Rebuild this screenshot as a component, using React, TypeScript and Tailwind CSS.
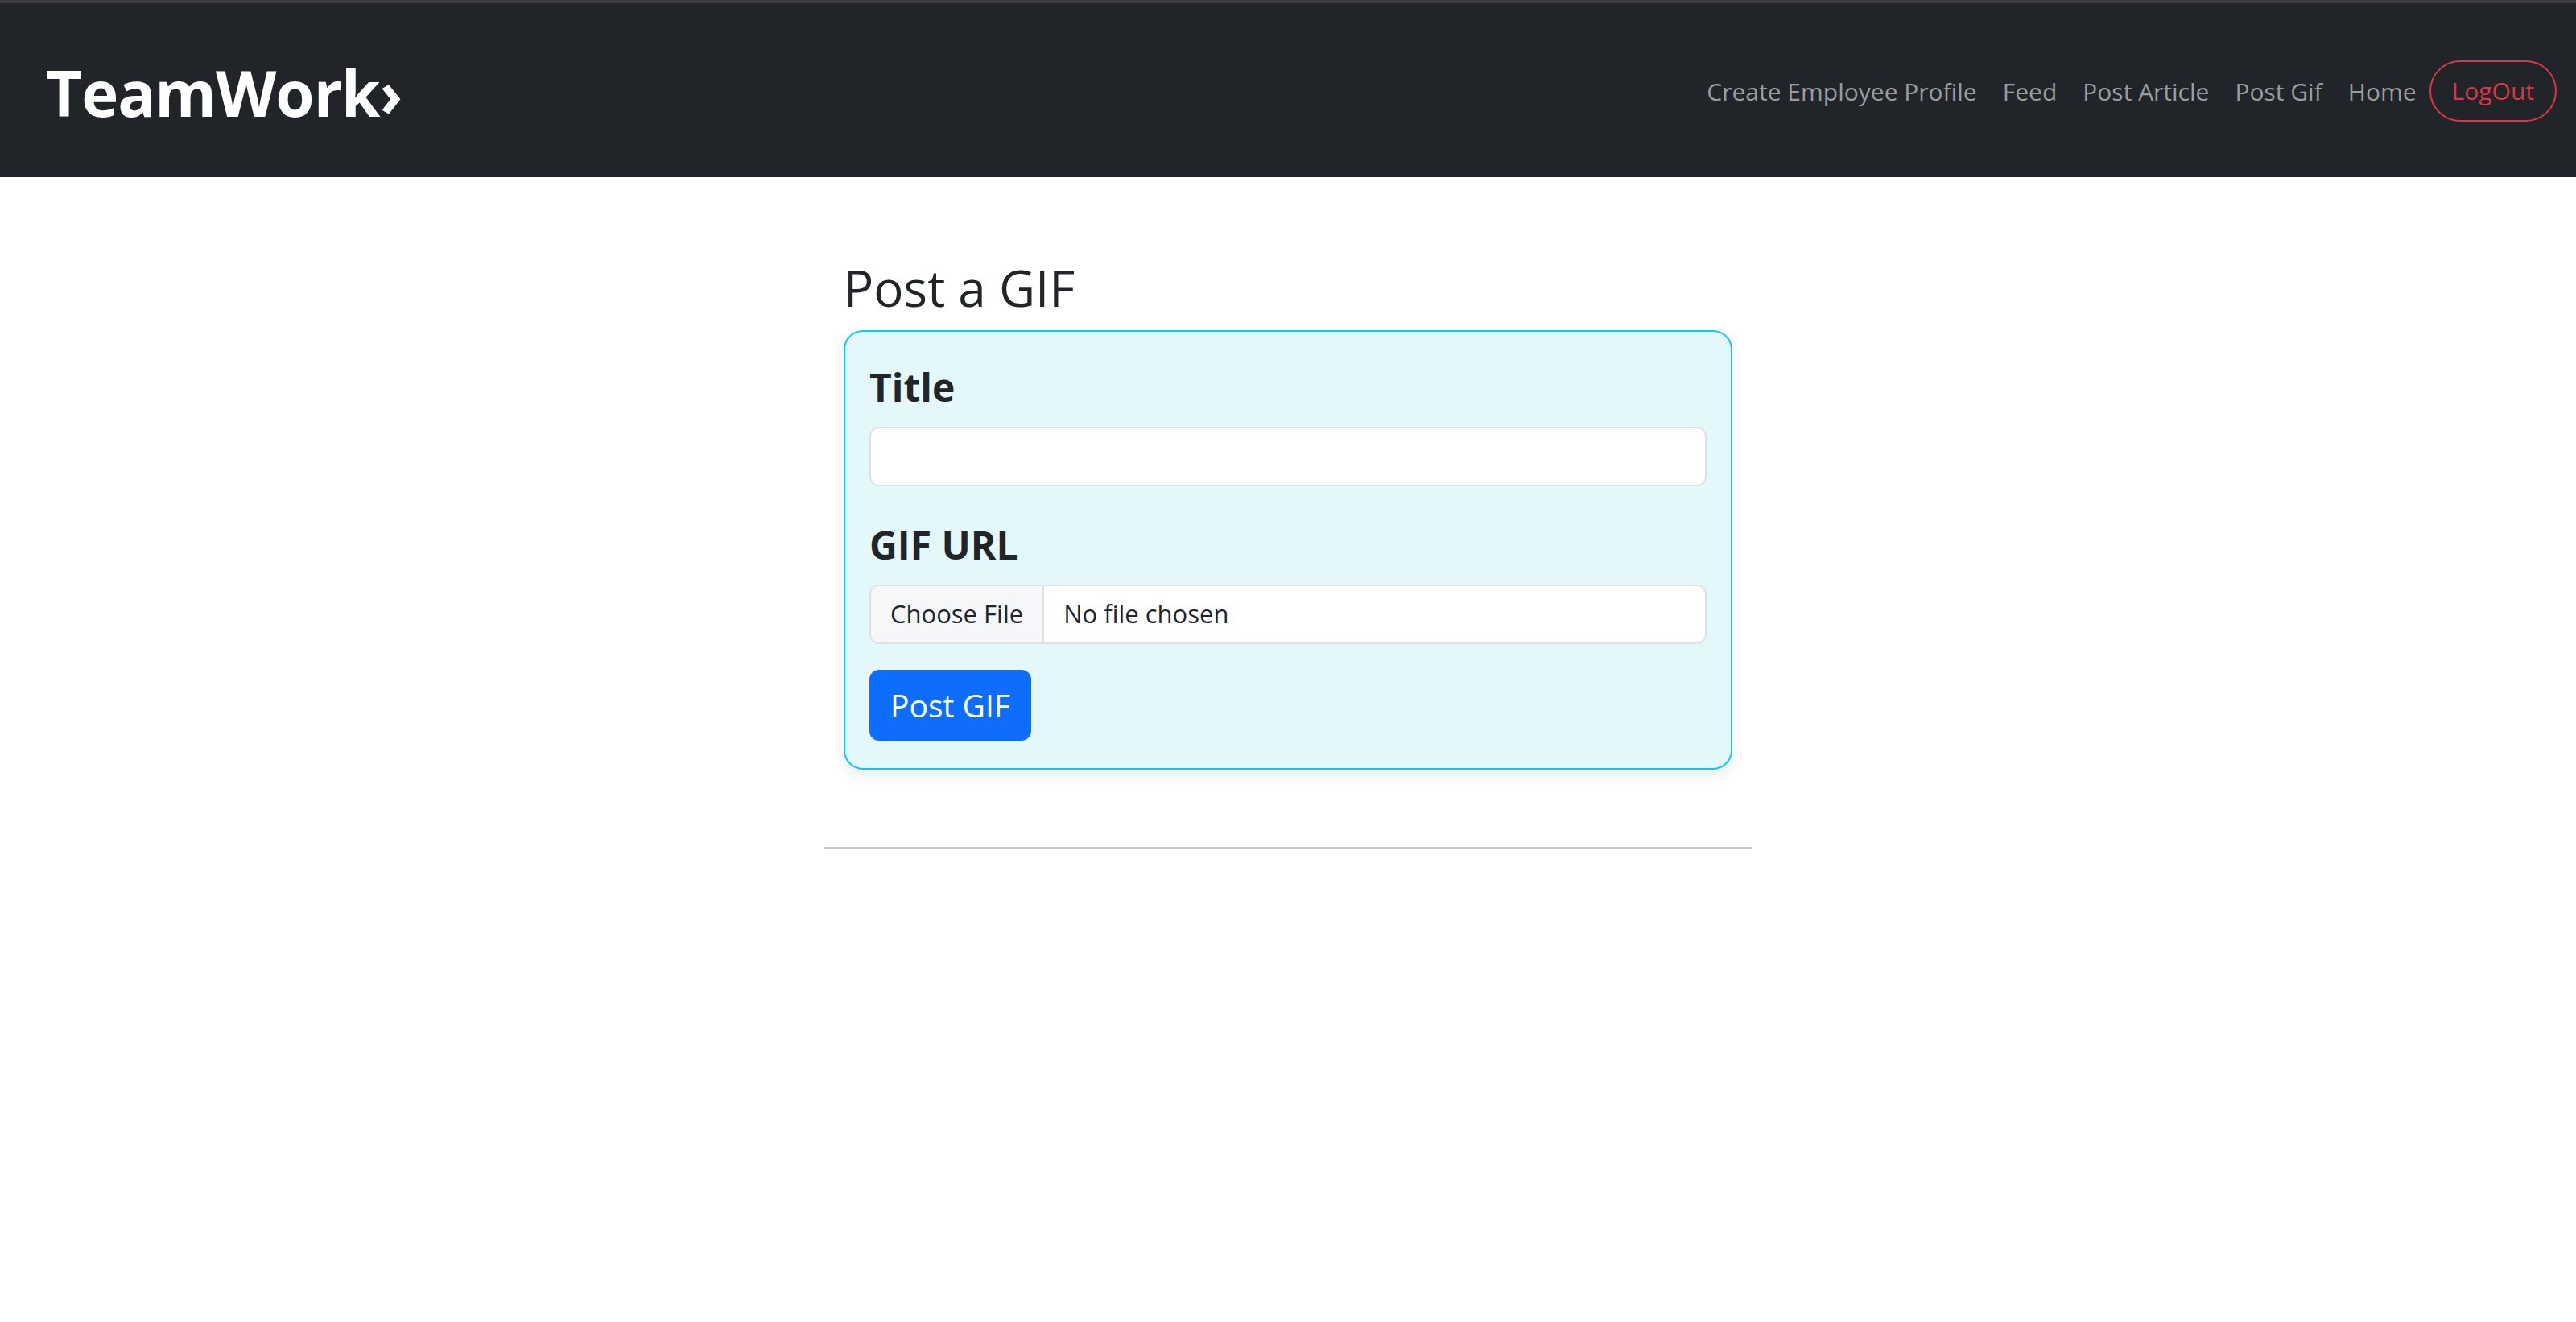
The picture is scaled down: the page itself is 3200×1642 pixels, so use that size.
import React, { useState } from 'react';

const links = ['Create Employee Profile', 'Feed', 'Post Article', 'Post Gif', 'Home'];

const NavBar = () => {
  return (
    <nav className="h-[220px] bg-[#212529] border-t-4 border-[#3a3b3f] flex items-center justify-between pl-[57px] pr-[24px]">
      {/* Brand */}
      <a href="#" className="text-white font-bold text-[78px] leading-none tracking-[-1px] mt-[6px]">
        TeamWork›
      </a>

      {/* Links */}
      <div className="flex items-center mt-[2px]">
        {links.map((name) => (
          <a key={name} href="#" className="px-[16px] text-[30px] text-[#9a9c9f] leading-[1.5]">
            {name}
          </a>
        ))}
        <button className="h-[76px] px-[26px] rounded-full border-2 border-[#dc3545] text-[#dc3545] text-[30px] leading-none">
          LogOut
        </button>
      </div>
    </nav>
  );
};

const PostGifForm = () => {
  const [title, setTitle] = useState('');

  return (
    <div className="w-[1152px] mx-auto">
      <div className="px-[24px] pt-[100px]">
        <h2 className="text-[62px] font-medium leading-[1.2] text-[#212529] mb-[16px]">Post a GIF</h2>

        <form
          className="bg-[#e4f7fb] border-2 border-[#0dcaf0] rounded-[24px] px-[30px] pt-[40px] pb-[34px] shadow-[0_8px_16px_rgba(0,0,0,0.08)]"
          onSubmit={(e) => e.preventDefault()}
        >
          <div className="mb-[44px]">
            <label className="block text-[48px] font-bold leading-[1.2] text-[#212529] mb-[20px]">Title</label>
            <input
              value={title}
              onChange={(e) => setTitle(e.target.value)}
              className="block w-full h-[74px] bg-white border-2 border-[#dee2e6] rounded-[12px] px-[24px] text-[32px] outline-none"
            />
          </div>

          <div className="mb-[32px]">
            <label className="block text-[48px] font-bold leading-[1.2] text-[#212529] mb-[20px]">GIF URL</label>
            <div className="flex w-full h-[74px] bg-white border-2 border-[#dee2e6] rounded-[12px] overflow-hidden text-[31px] text-[#212529]">
              <span className="flex items-center px-[24px] bg-[#f6f7f9] border-r-2 border-[#dee2e6]">Choose File</span>
              <span className="flex items-center px-[24px]">No file chosen</span>
            </div>
          </div>

          <button
            type="submit"
            className="h-[88px] px-[26px] bg-[#0d6efd] text-white text-[39px] leading-none rounded-[12px]"
          >
            Post GIF
          </button>
        </form>
      </div>

      <hr className="mt-[96px] border-0 border-t-2 border-[#c8c9ca]" />
    </div>
  );
};

const App = () => {
  return (
    <div className="min-h-screen bg-white font-['Open_Sans',_'Noto_Sans',_sans-serif]">
      <NavBar />
      <PostGifForm />
    </div>
  );
};

export default App;
